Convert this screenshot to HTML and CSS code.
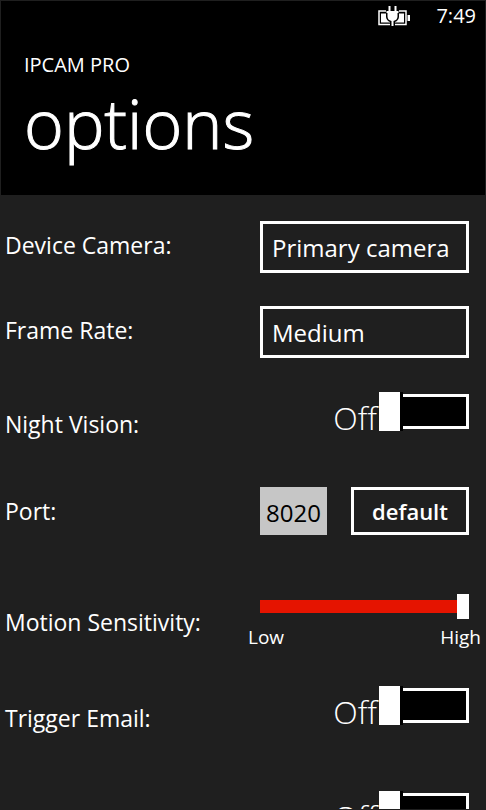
FILE: index.html
```html
<!DOCTYPE html>
<html lang="en">
<head>
<meta charset="utf-8">
<meta name="viewport" content="width=device-width, initial-scale=1">
<title>IPCAM PRO options</title>
<link rel="stylesheet" href="styles.css">
</head>
<body>
<div class="screen">
  <header class="header">
    <div class="status">
      <svg class="battery" viewBox="0 0 33 20" width="33" height="20" aria-hidden="true">
        <path d="M1 5H28V18.500H1Z" fill="none" stroke="#fff" stroke-width="1.500"/>
        <path d="M3 7.500H26V16.500H3Z" fill="#fff"/>
        <path d="M29.500 9H32V15H29.500Z" fill="#fff"/>
        <path d="M8 3H21V11Q20.500 14.500 17 16V20H12V16Q8.500 14.500 8 11Z" fill="#000"/>
        <path d="M10.500 0H12.500V5H16.500V0H18.500V5H20.500V7H19.500V10.500Q19.500 14 15.500 15V20H13.500V15Q9.500 14 9.500 10.500V7H8.500V5H10.500Z" fill="#fff"/>
      </svg>
      <time class="clock">7:49</time>
    </div>
    <p class="app-name">IPCAM PRO</p>
    <h1 class="title">options</h1>
  </header>
  <main class="options">
    <div class="row row-select">
      <label class="label" for="camera">Device Camera:</label>
      <div class="control"><select class="select" id="camera"><option>Primary camera</option><option>Front camera</option></select></div>
    </div>
    <div class="row row-select">
      <label class="label" for="rate">Frame Rate:</label>
      <div class="control"><select class="select" id="rate"><option>Medium</option><option>Low</option><option>High</option></select></div>
    </div>
    <div class="row row-toggle">
      <label class="label" for="night">Night Vision:</label>
      <div class="control toggle"><span class="state">Off</span><input class="switch" type="checkbox" id="night"></div>
    </div>
    <div class="row row-port">
      <label class="label" for="port">Port:</label>
      <div class="control port"><input class="port-input" type="text" id="port" value="8020"><button class="button" type="button">default</button></div>
    </div>
    <div class="row row-slider">
      <label class="label" for="motion">Motion Sensitivity:</label>
      <div class="control">
        <input class="slider" type="range" id="motion" min="0" max="100" value="100">
        <div class="scale"><span>Low</span><span>High</span></div>
      </div>
    </div>
    <div class="row row-toggle">
      <label class="label" for="email">Trigger Email:</label>
      <div class="control toggle"><span class="state">Off</span><input class="switch" type="checkbox" id="email"></div>
    </div>
    <div class="row row-toggle">
      <div class="control toggle"><span class="state">Off</span><input class="switch" type="checkbox" aria-label="Option"></div>
    </div>
  </main>
</div>
</body>
</html>
```
FILE: styles.css
```css
* {
  box-sizing: border-box;
}

body {
  margin: 0;
  background: #1f1f1f;
  color: #fff;
  font-family: "Open Sans", "Noto Sans", sans-serif;
}

.screen {
  display: flex;
  flex-direction: column;
  height: 100vh;
  border: 1px solid #1f1f1f;
}

.header {
  flex: none;
  padding: 0 9px 27px 23px;
  background: #000;
}

.status {
  display: flex;
  justify-content: flex-end;
  gap: 25px;
  padding-top: 5px;
}

.clock {
  font-size: 20px;
  line-height: 20px;
}

.app-name {
  margin: 26px 0 0;
  font-size: 20px;
  line-height: 26px;
}

.title {
  margin: 0;
  font-size: 68px;
  font-weight: 300;
  line-height: 90px;
  -webkit-text-stroke: 1px #fff;
}

.options {
  flex: 1;
  min-height: 0;
  padding-top: 9px;
  overflow-y: auto;
  scrollbar-width: none;
}

.row {
  display: grid;
  grid-template-columns: 1fr 209px;
  align-items: center;
  min-height: 85px;
  padding: 0 16px 0 4px;
}

.label {
  font-size: 23px;
  line-height: 30px;
}

.row-select .label {
  padding-bottom: 4px;
}

.control {
  grid-column: 2;
}

.select {
  display: block;
  width: 100%;
  height: 52px;
  padding: 2px 9px 0;
  border: 3px solid #fff;
  border-radius: 0;
  appearance: none;
  background: transparent;
  color: #fff;
  font: 24px "Open Sans", "Noto Sans", sans-serif;
}

.row-toggle {
  align-items: start;
  min-height: 105px;
  padding-top: 18px;
}

.row-toggle .label {
  padding-top: 17px;
}

.row-toggle:has(+ .row-port) {
  min-height: 93px;
}

.toggle {
  display: flex;
  justify-content: flex-end;
  gap: 2px;
}

.state {
  padding-top: 8px;
  font-size: 32px;
  font-weight: 300;
  line-height: 36px;
}

.switch {
  position: relative;
  width: 90px;
  height: 39px;
  margin: 0;
  appearance: none;
  background: linear-gradient(#fff, #fff) left / 21px 100% no-repeat;
}

.switch::before {
  content: "";
  position: absolute;
  inset: 2px 0 2px 24px;
  border: 3px solid #fff;
  border-left: 0;
  background: #000;
}

.switch::after {
  content: "";
  position: absolute;
  inset: 0 auto 0 21px;
  width: 3px;
  background: #000;
}

.row-port {
  min-height: 88px;
}

.port {
  display: flex;
  gap: 24px;
}

.port-input {
  width: 67px;
  height: 48px;
  padding: 2px 0 0;
  border: 0;
  background: #c6c6c6;
  color: #000;
  font: 24px "Open Sans", "Noto Sans", sans-serif;
  text-align: center;
}

.button {
  flex: 1;
  height: 48px;
  padding: 0;
  border: 3px solid #fff;
  background: transparent;
  color: #fff;
  font: 600 22px "Open Sans", "Noto Sans", sans-serif;
}

.row-slider {
  align-items: start;
  min-height: 113px;
  padding-top: 39px;
}

.row-slider .label {
  padding-top: 13px;
}

.slider {
  display: block;
  width: 100%;
  height: 25px;
  margin: 0;
  appearance: none;
  background: linear-gradient(#e51400, #e51400) center / 100% 13px no-repeat;
}

.slider::-webkit-slider-thumb {
  width: 12px;
  height: 25px;
  appearance: none;
  background: #fff;
}

.scale {
  display: flex;
  justify-content: space-between;
  margin: 5px -12px 0;
  font-size: 19px;
  line-height: 26px;
}
```
